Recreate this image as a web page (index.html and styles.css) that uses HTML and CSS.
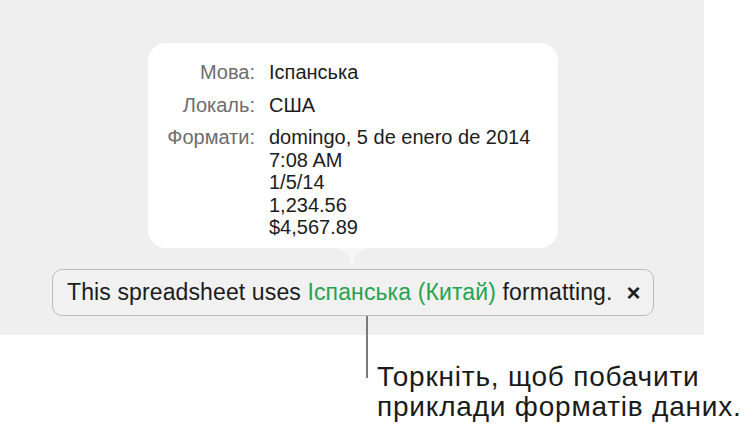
FILE: index.html
```html
<!DOCTYPE html>
<html lang="uk">
<head>
    <meta charset="UTF-8">
    <meta name="viewport" content="width=device-width, initial-scale=1.0">
    <title>Формати даних</title>
    <link rel="stylesheet" href="styles.css">
</head>
<body>
    <div class="stage">
        <div class="popover">
            <div class="label">Мова:</div>
            <div class="value">Іспанська</div>
            <div class="label">Локаль:</div>
            <div class="value">США</div>
            <div class="label">Формати:</div>
            <div class="value">
                <div>domingo, 5 de enero de 2014</div>
                <div>7:08 AM</div>
                <div>1/5/14</div>
                <div>1,234.56</div>
                <div>$4,567.89</div>
            </div>
        </div>
        <svg class="arrow" width="40" height="21" viewBox="0 0 40 21">
            <path d="M0 0 C10 0 14 4 17 9 L20 21 L23 9 C26 4 30 0 40 0 Z" fill="#f7f7f7"/>
        </svg>
        <div class="banner">
            <span class="msg">This spreadsheet uses <span class="locale">Іспанська (Китай)</span> formatting.</span>
            <span class="close">×</span>
        </div>
    </div>
    <div class="callout">
        <div class="line"></div>
        <p>Торкніть, щоб побачити<br>приклади форматів даних.</p>
    </div>
</body>
</html>
```

FILE: styles.css
```css
* {
    margin: 0;
    padding: 0;
    box-sizing: border-box;
}
body {
    background: white;
    width: 755px;
    height: 436px;
    overflow: hidden;
    font-family: "Liberation Sans", Arial, sans-serif;
}
.stage {
    width: 704px;
    height: 335px;
    background: #efefef;
    padding-top: 43px;
    display: flex;
    flex-direction: column;
    align-items: flex-start;
}
.popover {
    margin-left: 148px;
    width: 410px;
    height: 205px;
    background: #fff;
    border-radius: 18px;
    padding: 18px 0 0 16px;
    display: grid;
    grid-template-columns: 91px auto;
    column-gap: 14px;
    row-gap: 10px;
    align-content: start;
    font-size: 20px;
    line-height: 22.5px;
}
.label {
    text-align: right;
    white-space: nowrap;
    color: #6d6d6d;
}
.value {
    color: #1c1c1c;
}
.arrow {
    display: block;
    margin-left: 332px;
}
.banner {
    margin-left: 52px;
    width: 602px;
    height: 47px;
    border: 1px solid #bcbcbc;
    border-radius: 10px;
    background: #f1f1f1;
    display: flex;
    align-items: center;
    padding-left: 14px;
    font-size: 23px;
    letter-spacing: 0.12px;
    color: #1c1c1c;
}
.locale {
    color: #26a34f;
}
.close {
    margin-left: 14px;
    font-size: 24px;
    font-weight: bold;
}
.callout {
    display: flex;
    align-items: flex-start;
    margin-top: -19px;
    margin-left: 366px;
}
.line {
    width: 2px;
    height: 62px;
    background: #7a7a7a;
}
.callout p {
    margin-left: 9px;
    margin-top: 46px;
    font-size: 28px;
    line-height: 30px;
    letter-spacing: 0.8px;
    color: #1a1a1a;
}
```
